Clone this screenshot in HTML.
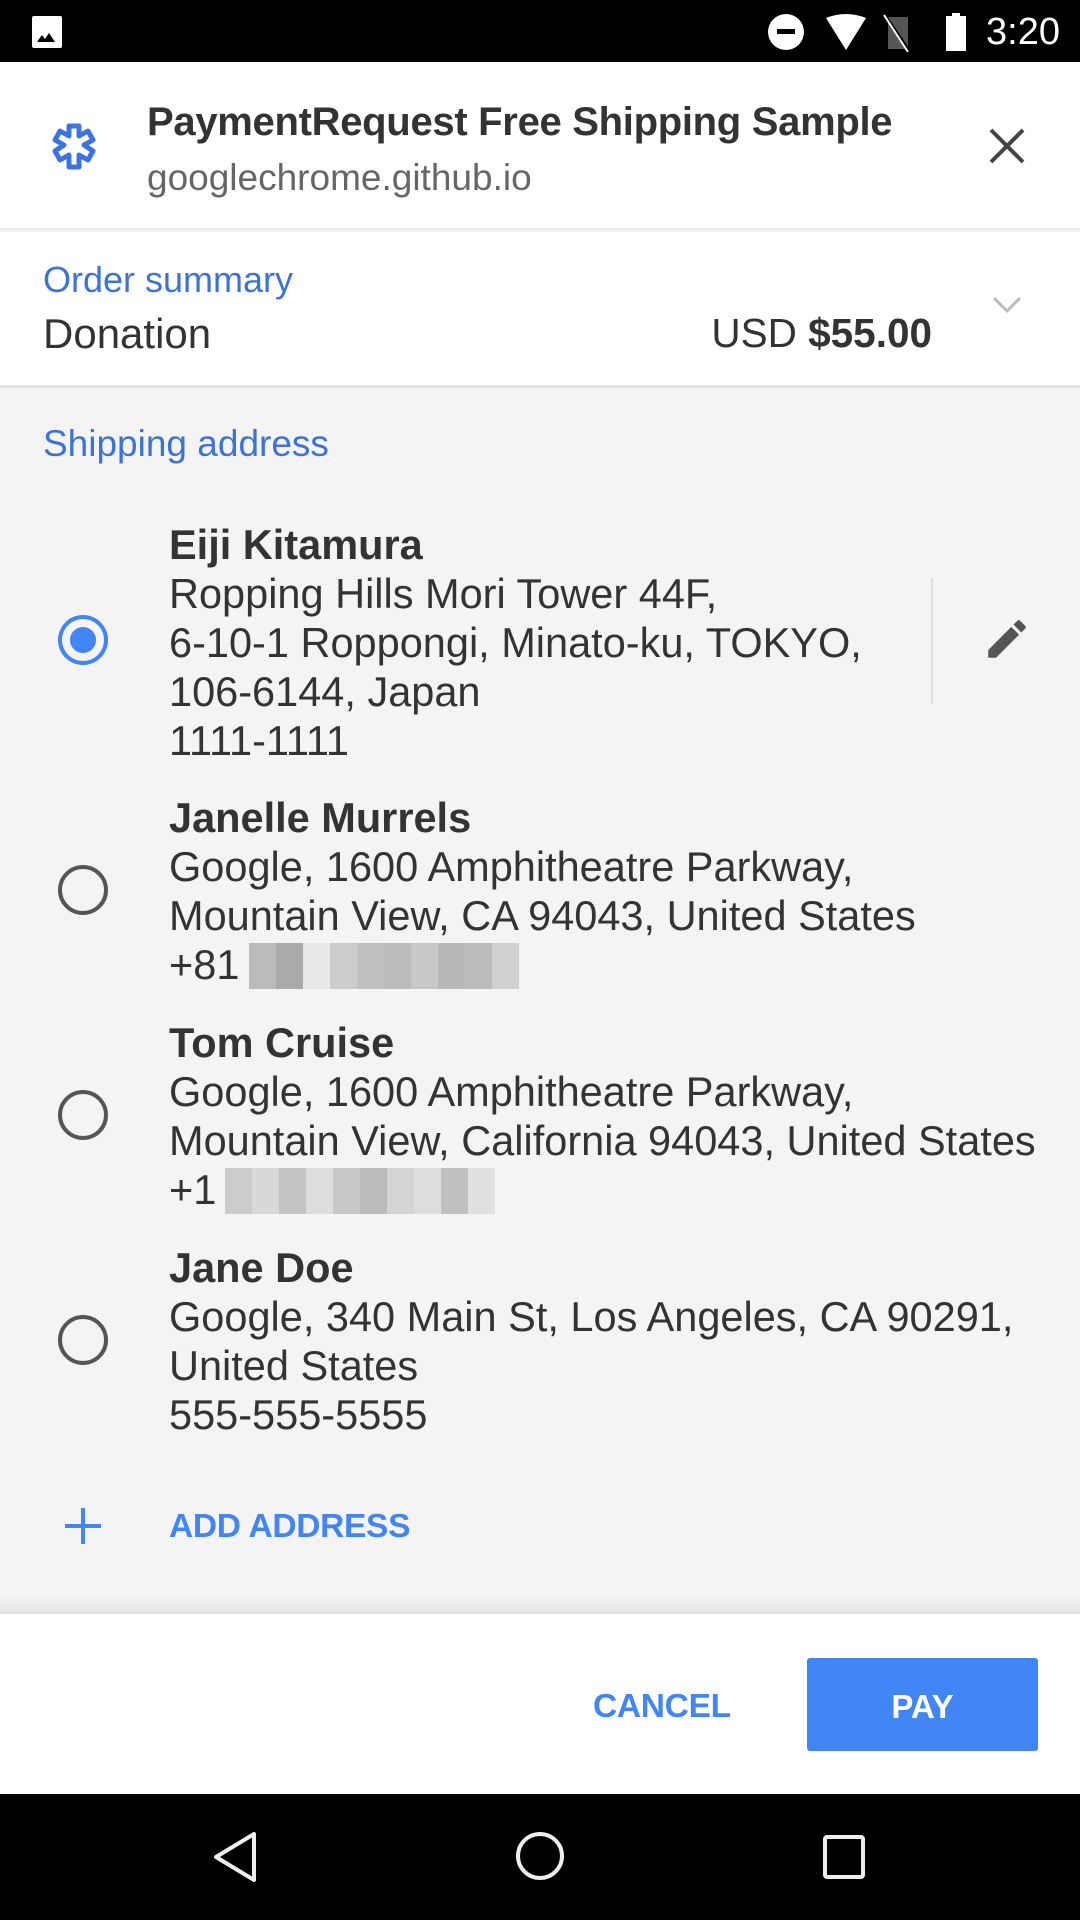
<!DOCTYPE html>
<html><head><meta charset="utf-8"><style>
*{margin:0;padding:0;box-sizing:border-box}
body{width:1080px;height:1920px;position:relative;background:#f4f4f4;font-family:"Liberation Sans",sans-serif;overflow:hidden;color:#333}
.a{position:absolute;white-space:nowrap;line-height:1}
.t{font-size:41.5px;color:#333}
.b{font-weight:bold}
.blur{position:absolute;height:46px;display:flex}
.blur i{display:block;width:27px;height:46px}
</style></head><body>
<!-- status bar -->
<div class="a" style="left:0;top:0;width:1080px;height:62px;background:#000"></div>
<svg class="a" style="left:30px;top:14px" width="36" height="36" viewBox="0 0 36 36"><rect x="2" y="2" width="30" height="32" rx="2" fill="#fff"/><path d="M7 28 L12 21 L15 25 L19 19 L25 28Z" fill="#000"/></svg>
<svg class="a" style="left:766px;top:12px" width="290" height="40" viewBox="0 0 290 40">
<ellipse cx="20" cy="20" rx="18" ry="18" fill="#fff"/><rect x="11" y="17" width="18" height="5" fill="#000"/>
<path d="M60 6 Q80 -2 100 6 L80 38Z" fill="#fff"/>
<path d="M122 5 L142 5 L142 37 L122 37Z" fill="#555"/><path d="M120 5 L144 40" stroke="#000" stroke-width="3"/><path d="M118 3 L142 40" stroke="#fff" stroke-width="2"/>
<rect x="180" y="4" width="20" height="35" fill="#fff"/><rect x="186" y="1" width="8" height="4" fill="#fff"/>
</svg>
<div class="a" style="left:986px;top:13px;font-size:38px;color:#fff">3:20</div>
<!-- header -->
<div class="a" style="left:0;top:62px;width:1080px;height:168px;background:#fff;border-bottom:2px solid #eaeaea"></div>
<svg class="a" style="left:46px;top:120px" width="56" height="56" viewBox="0 0 56 56"><path d="M23 6 H33 V16 L42 11 L47 20 L38 25 L47 31 L42 40 L33 35 V47 H23 V35 L14 40 L9 31 L18 25 L9 20 L14 11 L23 16Z" fill="none" stroke="#3b73e0" stroke-width="5" stroke-linejoin="round"/></svg>
<div class="a b" style="left:147px;top:102px;font-size:40px;color:#333;letter-spacing:-0.3px">PaymentRequest Free Shipping Sample</div>
<div class="a" style="left:147px;top:159px;font-size:37px;color:#666">googlechrome.github.io</div>
<svg class="a" style="left:987px;top:126px" width="40" height="40" viewBox="0 0 40 40"><path d="M4 4L36 36M36 4L4 36" stroke="#444" stroke-width="4"/></svg>
<!-- order summary -->
<div class="a" style="left:0;top:232px;width:1080px;height:156px;background:#fff;border-bottom:3px solid #e0e0e0"></div>
<div class="a" style="left:43px;top:262px;font-size:36px;color:#3b73d6">Order summary</div>
<div class="a" style="left:43px;top:313px;font-size:42px;color:#333">Donation</div>
<div class="a" style="right:148px;top:313px;font-size:40.5px;color:#333">USD <b>$55.00</b></div>
<svg class="a" style="left:992px;top:296px" width="30" height="18" viewBox="0 0 30 18"><path d="M2 2L15 15L28 2" stroke="#bbb" stroke-width="3" fill="none"/></svg>
<!-- shipping -->
<div class="a" style="left:43px;top:425px;font-size:37px;color:#3b73d6">Shipping address</div>
<!-- radios -->
<svg class="a" style="left:57px;top:614px" width="52" height="52"><circle cx="26" cy="26" r="23" fill="none" stroke="#4285f4" stroke-width="4"/><circle cx="26" cy="26" r="13" fill="#4285f4"/></svg>
<svg class="a" style="left:57px;top:864px" width="52" height="52"><circle cx="26" cy="26" r="23" fill="none" stroke="#555" stroke-width="4"/></svg>
<svg class="a" style="left:57px;top:1089px" width="52" height="52"><circle cx="26" cy="26" r="23" fill="none" stroke="#555" stroke-width="4"/></svg>
<svg class="a" style="left:57px;top:1314px" width="52" height="52"><circle cx="26" cy="26" r="23" fill="none" stroke="#555" stroke-width="4"/></svg>
<!-- entries -->
<div class="a t b" style="left:169px;top:524px">Eiji Kitamura</div>
<div class="a t" style="left:169px;top:573px">Ropping Hills Mori Tower 44F,</div>
<div class="a t" style="left:169px;top:622px">6-10-1 Roppongi, Minato-ku, TOKYO,</div>
<div class="a t" style="left:169px;top:671px">106-6144, Japan</div>
<div class="a t" style="left:169px;top:720px">1111-1111</div>
<div class="a" style="left:931px;top:578px;width:2px;height:126px;background:#ddd"></div>
<svg class="a" style="left:982px;top:614px" width="50" height="50" viewBox="0 0 24 24"><path d="M3 17.25V21h3.75L17.81 9.94l-3.75-3.75L3 17.25zM20.71 7.04a1 1 0 000-1.41l-2.34-2.34a1 1 0 00-1.41 0l-1.830 1.83 3.75 3.75 1.83-1.83z" fill="#555"/></svg>

<div class="a t b" style="left:169px;top:797px">Janelle Murrels</div>
<div class="a t" style="left:169px;top:846px">Google, 1600 Amphitheatre Parkway,</div>
<div class="a t" style="left:169px;top:895px">Mountain View, CA 94043, United States</div>
<div class="a t" style="left:169px;top:944px">+81</div>
<div class="blur" style="left:249px;top:943px"><i style="background:#bbb"></i><i style="background:#aaa"></i><i style="background:#e8e8e8"></i><i style="background:#ccc"></i><i style="background:#c0c0c0"></i><i style="background:#bbb"></i><i style="background:#c8c8c8"></i><i style="background:#b8b8b8"></i><i style="background:#bbb"></i><i style="background:#d0d0d0"></i></div>

<div class="a t b" style="left:169px;top:1022px">Tom Cruise</div>
<div class="a t" style="left:169px;top:1071px">Google, 1600 Amphitheatre Parkway,</div>
<div class="a t" style="left:169px;top:1120px">Mountain View, California 94043, United States</div>
<div class="a t" style="left:169px;top:1169px">+1</div>
<div class="blur" style="left:225px;top:1168px"><i style="background:#ccc"></i><i style="background:#d8d8d8"></i><i style="background:#c4c4c4"></i><i style="background:#ddd"></i><i style="background:#c8c8c8"></i><i style="background:#bbb"></i><i style="background:#d4d4d4"></i><i style="background:#ddd"></i><i style="background:#c0c0c0"></i><i style="background:#e0e0e0"></i></div>

<div class="a t b" style="left:169px;top:1247px">Jane Doe</div>
<div class="a t" style="left:169px;top:1296px">Google, 340 Main St, Los Angeles, CA 90291,</div>
<div class="a t" style="left:169px;top:1345px">United States</div>
<div class="a t" style="left:169px;top:1394px">555-555-5555</div>
<!-- add address -->
<svg class="a" style="left:63px;top:1506px" width="40" height="40"><path d="M20 2V38M2 20H38" stroke="#4285f4" stroke-width="4"/></svg>
<div class="a b" style="left:169px;top:1510px;font-size:33.5px;color:#4285f4;letter-spacing:-0.3px">ADD ADDRESS</div>
<div class="a" style="left:0;top:1596px;width:1080px;height:18px;background:linear-gradient(#f4f4f4,#e4e4e4)"></div>
<!-- footer -->
<div class="a" style="left:0;top:1614px;width:1080px;height:180px;background:#fff"></div>
<div class="a b" style="left:593px;top:1690px;font-size:33.5px;color:#4285f4;letter-spacing:-0.3px">CANCEL</div>
<div class="a" style="left:807px;top:1658px;width:231px;height:93px;background:#4285f4;border-radius:3px"></div>
<div class="a b" style="left:807px;top:1690px;width:231px;text-align:center;font-size:33px;color:#fff">PAY</div>
<!-- nav -->
<div class="a" style="left:0;top:1794px;width:1080px;height:126px;background:#000"></div>
<svg class="a" style="left:210px;top:1830px" width="50" height="54"><path d="M44 4 L44 50 L6 27Z" fill="none" stroke="#eee" stroke-width="4" stroke-linejoin="round"/></svg>
<svg class="a" style="left:514px;top:1830px" width="52" height="52"><circle cx="26" cy="26" r="22" fill="none" stroke="#eee" stroke-width="4"/></svg>
<svg class="a" style="left:822px;top:1834px" width="44" height="46"><rect x="3" y="3" width="38" height="40" rx="2" fill="none" stroke="#eee" stroke-width="4"/></svg>
</body></html>
